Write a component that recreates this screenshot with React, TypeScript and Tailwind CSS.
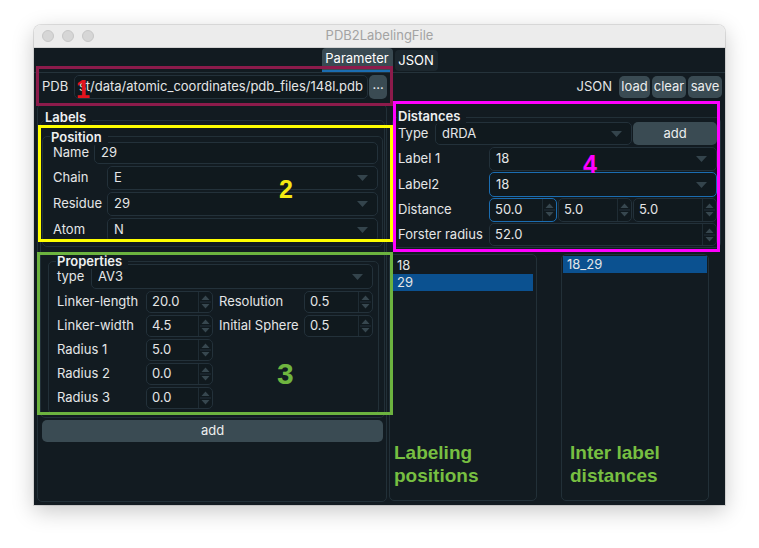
import React from "react";

// Qt-ish dark form widgets
const frame = "border border-[#223038]";
const field = "rounded-[5px] border bg-[#10191e]";

function Caret() {
  return (
    <svg width="11" height="6" viewBox="0 0 11 6" className="shrink-0">
      <path d="M0 0h11L5.5 6z" fill="#34444c" />
    </svg>
  );
}

function Arrows() {
  return (
    <svg width="13" height="20" viewBox="0 0 13 20" className="shrink-0">
      <path d="M2.5 8L6.5 3.5L10.5 8z" fill="#37474f" />
      <path d="M1 10h11" stroke="#22303a" strokeWidth="1" />
      <path d="M2.5 12L6.5 16.5L10.5 12z" fill="#37474f" />
    </svg>
  );
}

function Combo({ value, className, focus = false }: { value: string; className: string; focus?: boolean }) {
  return (
    <div
      className={`${field} ${focus ? "border-[#1b6db1]" : "border-[#23313a]"} flex items-center justify-between pl-[6px] pr-[9px] ${className}`}
    >
      <span>{value}</span>
      <Caret />
    </div>
  );
}

function Spin({ value, className, focus = false }: { value: string; className: string; focus?: boolean }) {
  return (
    <div className={`${field} ${focus ? "border-[#1b6db1]" : "border-[#23313a]"} flex items-center ${className}`}>
      <span className="flex-1 pl-[5px]">{value}</span>
      <div className="flex h-full items-center border-l border-[#1f2c34]">
        <Arrows />
      </div>
    </div>
  );
}

function Button({ label, className }: { label: string; className: string }) {
  return (
    <div className={`flex items-center justify-center rounded-[5px] bg-[#3a4b53] text-[#eceeef] ${className}`}>
      {label}
    </div>
  );
}

function TitleBar() {
  return (
    <div className="grid h-[23px] grid-cols-[1fr_auto_1fr] items-center border-b border-[#d2d2d2] bg-[#ececec]">
      <div className="flex gap-[8px] pl-[8px]">
        <span className="h-[12px] w-[12px] rounded-full border border-[#c6c6c6] bg-[#d6d6d6]" />
        <span className="h-[12px] w-[12px] rounded-full border border-[#c6c6c6] bg-[#d6d6d6]" />
        <span className="h-[12px] w-[12px] rounded-full border border-[#c6c6c6] bg-[#d6d6d6]" />
      </div>
      <span className="text-[13px] text-[#a3a3a3]">PDB2LabelingFile</span>
      <div />
    </div>
  );
}

function Tabs() {
  return (
    <div className="flex h-[25px] justify-center gap-[2px] border-b border-[#25333b]">
      <div className="flex h-[24px] w-[71px] items-center justify-center rounded-t-[4px] border-b-2 border-[#1b6db1] bg-[#3a4a52] text-white">
        Parameter
      </div>
      <div className="mt-[2px] flex h-[21px] w-[43px] items-center justify-center rounded-[4px] bg-[#1c272e] text-white">
        JSON
      </div>
    </div>
  );
}

function GroupTitle({ text, className }: { text: string; className: string }) {
  return (
    <span className={`absolute bg-[#121b21] pl-[1px] pr-[6px] font-semibold leading-[16px] text-[#eef0f1] ${className}`}>
      {text}
    </span>
  );
}

function LeftColumn() {
  const props = [
    ["Linker-length", "20.0", "Resolution", "0.5"],
    ["Linker-width", "4.5", "Initial Sphere", "0.5"],
    ["Radius 1", "5.0"],
    ["Radius 2", "0.0"],
    ["Radius 3", "0.0"],
  ];
  return (
    <div className="flex w-[350px] flex-col">
      <div className="mt-[2px] flex h-[24px] items-center">
        <span className="w-[37px] pl-[5px]">PDB</span>
        <div className={`${field} flex h-full w-[295px] items-center whitespace-nowrap border-[#23313a] pl-[4px]`}>
          st/data/atomic_coordinates/pdb_files/148l.pdb
        </div>
        <Button label="..." className="ml-[1px] h-full w-[18px] pb-[4px]" />
      </div>

      <div className={`mt-[5px] h-[398px] rounded-[5px] ${frame} flex flex-col`}>
        <div className={`relative ml-[2px] mt-[15px] h-[298px] w-[345px] rounded-[5px] ${frame}`}>
          <GroupTitle text="Labels" className="left-[3px] top-[-12px]" />

          <div className={`relative ml-[1px] mt-[15px] h-[111px] w-[341px] rounded-[5px] ${frame}`}>
            <GroupTitle text="Position" className="left-[7px] top-[-8px]" />
            <div className="mt-[5px] flex h-[22px] items-center pl-[10px]">
              <span className="w-[41px]">Name</span>
              <div className={`${field} flex h-full w-[284px] items-center border-[#23313a] pl-[6px]`}>29</div>
            </div>
            {[
              ["Chain", "E"],
              ["Residue", "29"],
              ["Atom", "N"],
            ].map(([l, v]) => (
              <div key={l} className="mt-[2px] flex h-[24px] items-center pl-[10px]">
                <span className="w-[54px]">{l}</span>
                <Combo value={v} className="h-full w-[271px]" />
              </div>
            ))}
          </div>

          <div className={`relative ml-[7px] mt-[14px] h-[153px] w-[331px] rounded-[5px] ${frame}`}>
            <GroupTitle text="Properties" className="left-[7px] top-[-9px]" />
            <div className="mt-[2px] flex h-[25px] items-center pl-[8px]">
              <span className="w-[34px]">type</span>
              <Combo value="AV3" className="h-full w-[282px]" />
            </div>
            {props.map((r) => (
              <div key={r[0]} className="mt-[2px] flex h-[22px] items-center pl-[8px]">
                <span className="w-[89px]">{r[0]}</span>
                <Spin value={r[1]} className="h-full w-[67px]" />
                {r[2] && (
                  <>
                    <span className="ml-[6px] w-[85px]">{r[2]}</span>
                    <Spin value={r[3]} className="h-full w-[69px]" />
                  </>
                )}
              </div>
            ))}
          </div>
        </div>
        <Button label="add" className="ml-[4px] mt-[2px] h-[22px] w-[341px]" />
      </div>
    </div>
  );
}

function RightColumn() {
  return (
    <div className="flex w-[333px] flex-col">
      <div className="mt-[3px] flex h-[22px] items-center justify-end gap-[2px]">
        <span className="mr-[5px]">JSON</span>
        <Button label="load" className="h-full w-[31px]" />
        <Button label="clear" className="h-full w-[34px]" />
        <Button label="save" className="h-full w-[34px]" />
      </div>

      <div className={`relative ml-[3px] mt-[19px] h-[131px] w-[329px] rounded-[5px] ${frame}`}>
        <GroupTitle text="Distances" className="left-[4px] top-[-10px]" />
        <div className="mt-[4px] flex h-[23px] items-center pl-[5px]">
          <span className="w-[37px]">Type</span>
          <Combo value="dRDA" className="h-full w-[197px]" />
          <Button label="add" className="ml-[1px] h-full w-[84px]" />
        </div>
        <div className="mt-[2px] flex h-[24px] items-center pl-[5px]">
          <span className="w-[91px]">Label 1</span>
          <Combo value="18" className="h-full w-[228px]" />
        </div>
        <div className="mt-[1px] flex h-[25px] items-center pl-[5px]">
          <span className="w-[91px]">Label2</span>
          <Combo value="18" focus className="h-full w-[228px]" />
        </div>
        <div className="mt-[1px] flex h-[24px] items-center pl-[5px]">
          <span className="w-[91px]">Distance</span>
          <Spin value="50.0" focus className="h-full w-[68px]" />
          <Spin value="5.0" className="ml-[1px] h-full w-[74px]" />
          <Spin value="5.0" className="ml-[1px] h-full w-[84px]" />
        </div>
        <div className="mt-[1px] flex h-[23px] items-center pl-[5px]">
          <span className="w-[91px]">Forster radius</span>
          <Spin value="52.0" className="h-full w-[228px]" />
        </div>
      </div>

      <div className="mt-[6px] flex h-[247px]">
        <div className={`w-[148px] rounded-[5px] ${frame} px-[3px] pt-[2px]`}>
          <div className="flex h-[17px] items-center pl-[4px]">18</div>
          <div className="flex h-[17px] items-center bg-[#0b5190] pl-[4px]">29</div>
        </div>
        <div className={`ml-[24px] w-[148px] rounded-[5px] ${frame} px-[1px] pt-[1px]`}>
          <div className="flex h-[17px] items-center bg-[#0b5190] pl-[4px]">18_29</div>
        </div>
      </div>
    </div>
  );
}

function Annotations() {
  const num = "absolute font-['Liberation_Sans',Arial,sans-serif] font-bold leading-none";
  const note =
    "absolute top-[441px] font-['Liberation_Sans',Arial,sans-serif] text-[19px] font-bold leading-[23px] text-[#77bf41]";
  return (
    <>
      <div className="absolute left-[36px] top-[66px] h-[40px] w-[357px] border-[3px] border-[#8c1b4b]" />
      <div className="absolute left-[38px] top-[125px] h-[117px] w-[355px] border-[3px] border-[#ffff00]" />
      <div className="absolute left-[37px] top-[252px] h-[163px] w-[356px] border-[3px] border-[#6cb33f]" />
      <div className="absolute left-[393px] top-[101px] h-[151px] w-[327px] border-[3px] border-[#ff00ff]" />

      <span className={`${num} left-[76px] top-[77px] text-[25px] text-[#e3141d]`}>1</span>
      <span className={`${num} left-[279px] top-[177px] text-[25px] text-[#f3e813]`}>2</span>
      <span className={`${num} left-[277px] top-[359px] text-[30px] text-[#6fb53f]`}>3</span>
      <span className={`${num} left-[583px] top-[152px] text-[25px] text-[#ff00ff]`}>4</span>

      <div className={`${note} left-[394px]`}>
        Labeling
        <br />
        positions
      </div>
      <div className={`${note} left-[570px]`}>
        Inter label
        <br />
        distances
      </div>
    </>
  );
}

export default function App() {
  return (
    <div className="relative h-[548px] w-[759px] overflow-hidden bg-white font-['Inter','Noto_Sans',sans-serif] text-[13px] text-[#e4e6e7]">
      <div className="pl-[34px] pt-[25px]">
        <div className="flex h-[480px] w-[691px] flex-col overflow-hidden rounded-t-[7px] shadow-[0_6px_22px_rgba(0,0,0,0.22),0_0_0_1px_rgba(0,0,0,0.1)]">
          <TitleBar />
          <div className="flex flex-1 flex-col bg-[#121b21]">
            <Tabs />
            <div className="flex gap-[2px] px-[3px]">
              <LeftColumn />
              <RightColumn />
            </div>
          </div>
        </div>
      </div>
      <Annotations />
    </div>
  );
}
